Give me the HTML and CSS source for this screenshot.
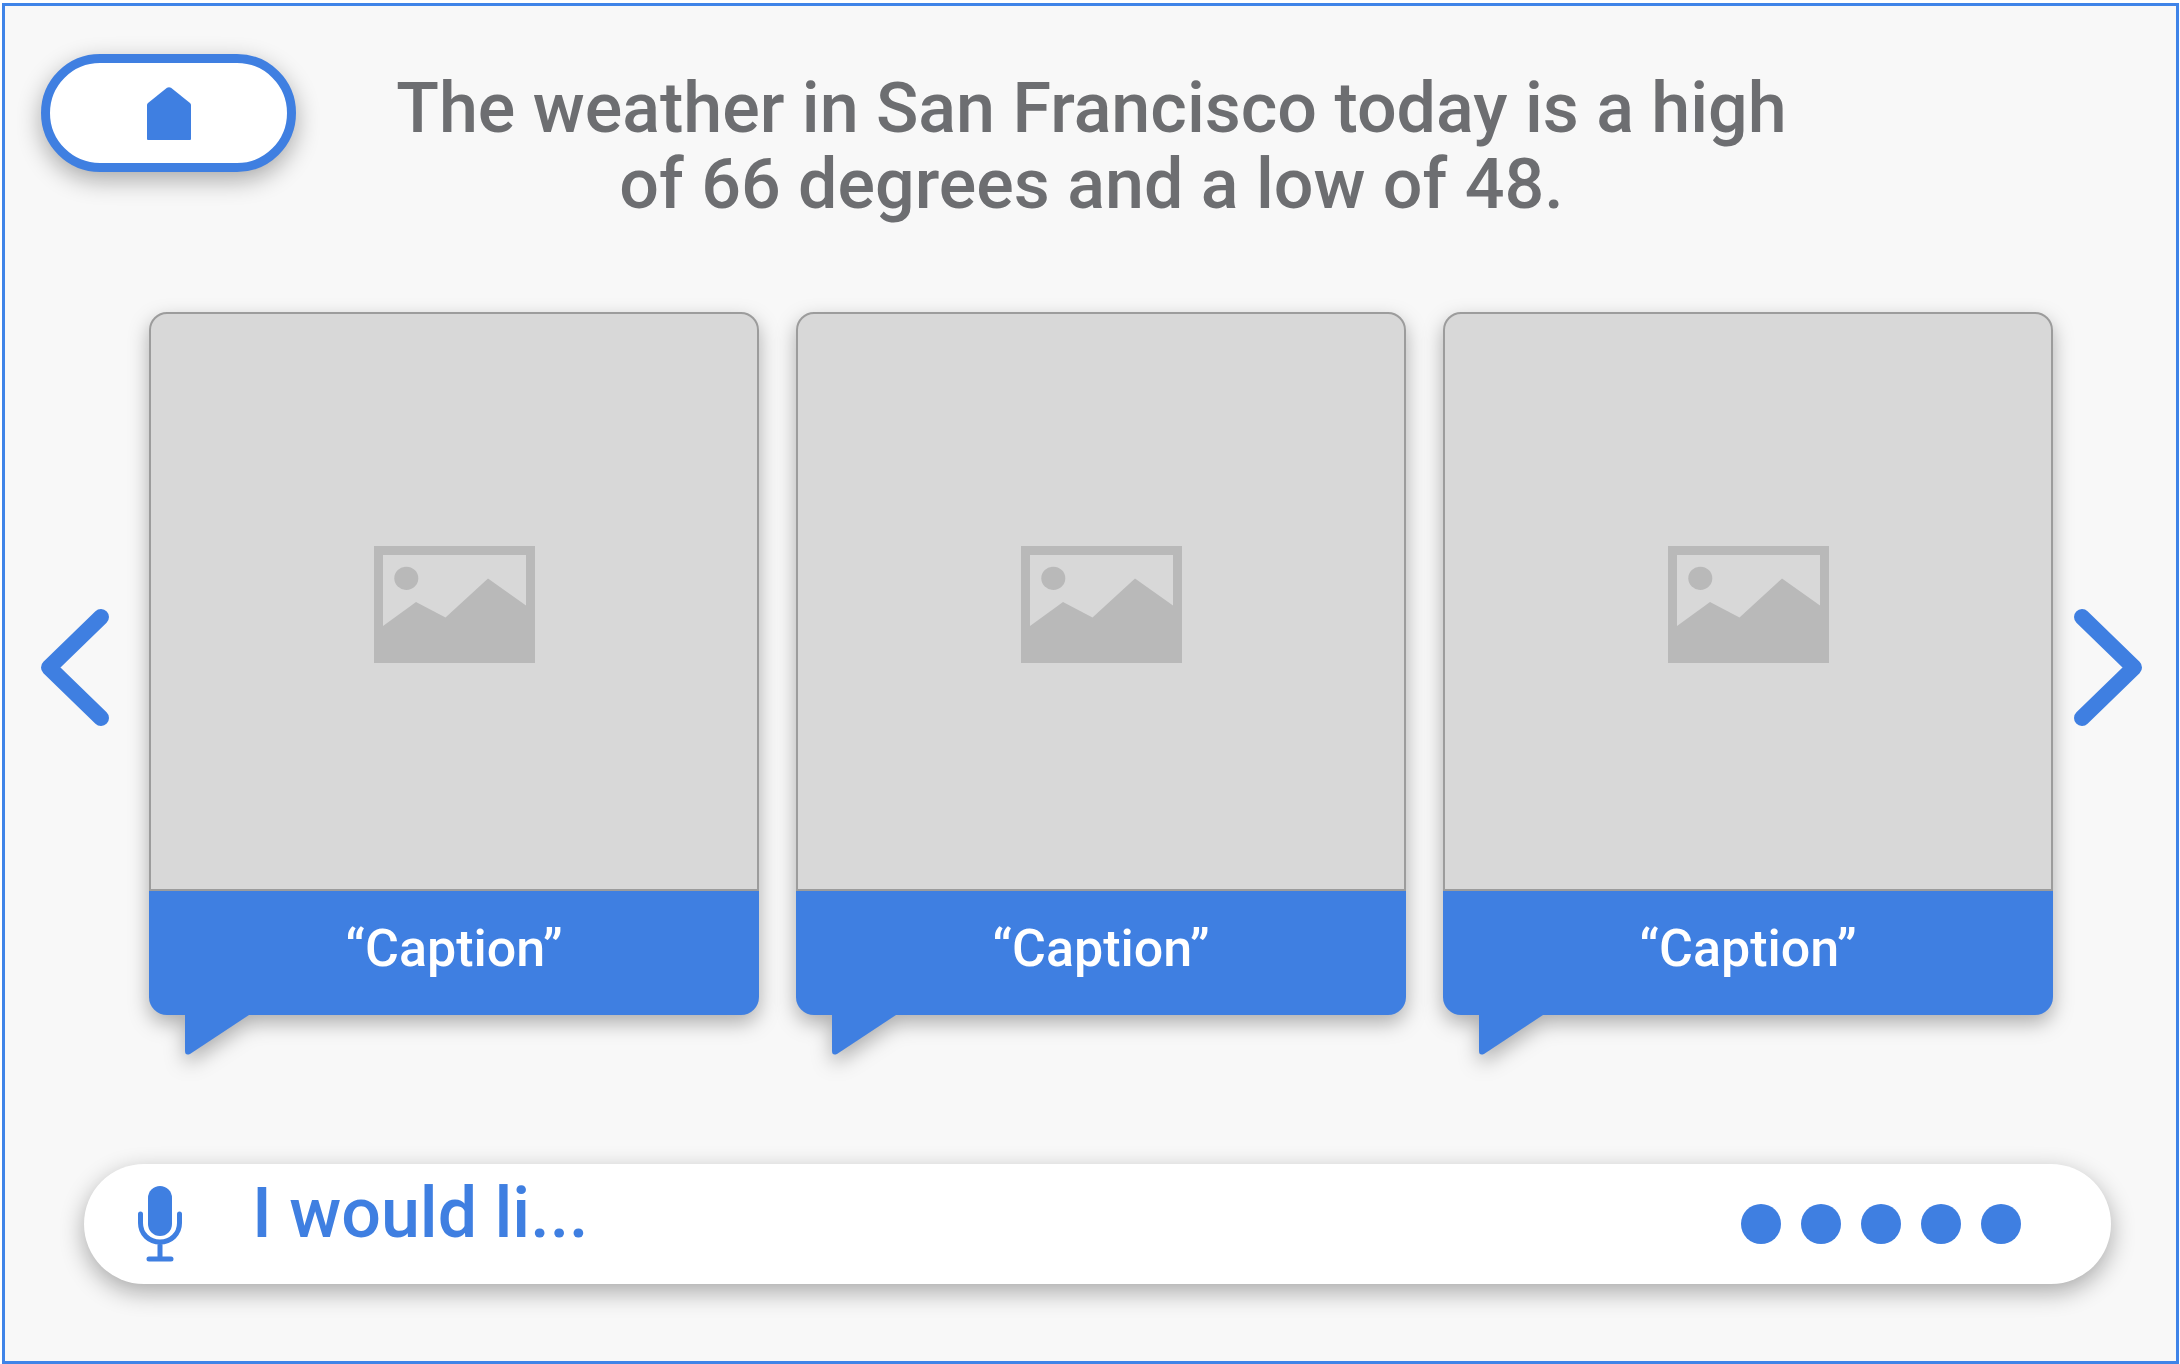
FILE: index.html
```html
<!DOCTYPE html>
<html lang="en">
<head>
<meta charset="utf-8">
<meta name="viewport" content="width=device-width, initial-scale=1">
<title>Weather</title>
<link rel="stylesheet" href="styles.css">
</head>
<body>
<svg class="sprite" aria-hidden="true">
  <symbol id="picture" viewBox="0 0 161 117">
    <path fill-rule="evenodd" d="M0 0H161V117H0ZM9 9V80L42 56L71.500 71.500L114 32.500L152 59.500V9Z"/>
    <ellipse cx="32.300" cy="32.300" rx="12" ry="11.600"/>
  </symbol>
  <symbol id="tail" viewBox="0 0 64 40">
    <path d="M0 0H64L5 39Q0 41 0 36Z"/>
  </symbol>
</svg>
<div class="frame">
  <header class="header">
    <button class="home" type="button" aria-label="Home">
      <svg class="home-icon" viewBox="0 0 44 53"><path d="M20 .800Q22 -.500 24 .800L43 16Q44 17 44 18V52Q44 53 43 53H1Q0 53 0 52V18Q0 17 1 16Z"/></svg>
    </button>
    <h1 class="title">The weather in San Francisco today is a high of 66 degrees and a low of 48.</h1>
  </header>

  <main class="carousel">
    <button class="arrow" type="button" aria-label="Previous">
      <svg class="arrow-icon" viewBox="0 0 68 117"><path d="M60 8L8 58.500L60 109"/></svg>
    </button>
    <div class="cards">
      <figure class="card">
        <div class="photo"><svg class="photo-icon"><use href="#picture"/></svg></div>
        <figcaption class="caption">“Caption”</figcaption>
        <svg class="tail"><use href="#tail"/></svg>
      </figure>
      <figure class="card">
        <div class="photo"><svg class="photo-icon"><use href="#picture"/></svg></div>
        <figcaption class="caption">“Caption”</figcaption>
        <svg class="tail"><use href="#tail"/></svg>
      </figure>
      <figure class="card">
        <div class="photo"><svg class="photo-icon"><use href="#picture"/></svg></div>
        <figcaption class="caption">“Caption”</figcaption>
        <svg class="tail"><use href="#tail"/></svg>
      </figure>
    </div>
    <button class="arrow" type="button" aria-label="Next">
      <svg class="arrow-icon" viewBox="0 0 68 117"><path d="M8 8L60 58.500L8 109"/></svg>
    </button>
  </main>

  <form class="voice">
    <button class="mic" type="button" aria-label="Speak">
      <svg class="mic-icon" viewBox="0 0 44 76">
        <rect x="10" y="0" width="24" height="50" rx="12"/>
        <path class="mic-line" d="M2.500 28V37C2.500 48 11 56 22 56S41.500 48 41.500 37V28M22 56V73M11 73H33"/>
      </svg>
    </button>
    <input class="query" type="text" aria-label="Your request" value="I would li...">
    <div class="dots" aria-hidden="true">
      <span class="dot"></span><span class="dot"></span><span class="dot"></span><span class="dot"></span><span class="dot"></span>
    </div>
  </form>
</div>
</body>
</html>
```
FILE: styles.css
```css
:root {
  --blue: #3f7fe1;
  --font: Roboto, "Open Sans", sans-serif;
}

* {
  box-sizing: border-box;
}

body {
  margin: 0;
  padding: 3px 1px 0 2px;
  background: #fff;
  font-family: var(--font);
  font-weight: 500;
}

button {
  padding: 0;
  border: 0;
  background: none;
  cursor: pointer;
}

svg {
  display: block;
}

.sprite {
  position: absolute;
  width: 0;
  height: 0;
}

.frame {
  display: flex;
  flex-direction: column;
  min-height: calc(100vh - 3px);
  padding: 48px 34px 77px 36px;
  border: 3px solid #3f84e8;
  background: #f8f8f8;
}

.header {
  display: grid;
  grid-template-columns: 255px minmax(0, 1400px) 255px;
  justify-content: space-between;
  align-items: start;
}

.home {
  display: flex;
  align-items: center;
  justify-content: center;
  height: 118px;
  border: 9px solid var(--blue);
  border-radius: 59px;
  background: #fff;
  box-shadow: 0 8px 24px rgba(0, 0, 0, 0.32);
}

.home-icon {
  width: 44px;
  height: 53px;
  fill: var(--blue);
}

.title {
  margin: 0;
  padding-top: 16px;
  color: #6d6e71;
  font-size: 70px;
  font-weight: 500;
  line-height: 76px;
  text-align: center;
}

.carousel {
  display: grid;
  grid-template-columns: 68px minmax(0, 1fr) 68px;
  align-items: center;
  padding-top: 90px;
}

.arrow {
  padding-top: 8px;
}

.arrow-icon {
  width: 68px;
  height: 117px;
  fill: none;
  stroke: var(--blue);
  stroke-width: 16;
  stroke-linecap: round;
  stroke-linejoin: round;
}

.cards {
  display: grid;
  grid-template-columns: repeat(3, minmax(0, 1fr));
  gap: 37px;
  padding: 0 21px 0 40px;
}

.card {
  position: relative;
  margin: 0;
  filter: drop-shadow(0 8px 10px rgba(0, 0, 0, 0.3));
}

.photo {
  display: flex;
  align-items: center;
  justify-content: center;
  aspect-ratio: 610 / 579;
  padding-top: 6px;
  border: 2px solid #9c9c9c;
  border-radius: 18px 18px 0 0;
  background: #d8d8d8;
}

.photo-icon {
  width: 161px;
  height: 117px;
  fill: #b9b9b9;
}

.caption {
  padding: 26px 24px 34px;
  border-radius: 0 0 18px 18px;
  background: var(--blue);
  color: #fff;
  font-size: 52px;
  line-height: 64px;
  text-align: center;
}

.tail {
  position: absolute;
  top: 100%;
  left: 36px;
  width: 64px;
  height: 40px;
  fill: var(--blue);
}

.voice {
  display: flex;
  align-items: center;
  height: 120px;
  margin: auto 31px 0 43px;
  padding: 0 90px 0 54px;
  border-radius: 60px;
  background: #fff;
  box-shadow: 0 8px 24px rgba(0, 0, 0, 0.32);
}

.mic-icon {
  width: 44px;
  height: 76px;
  fill: var(--blue);
}

.mic-line {
  fill: none;
  stroke: var(--blue);
  stroke-width: 5;
  stroke-linecap: round;
}

.query {
  flex: 1;
  min-width: 0;
  height: 100px;
  margin-left: 70px;
  padding: 0 0 22px;
  border: 0;
  outline: 0;
  background: transparent;
  color: var(--blue);
  font-family: inherit;
  font-size: 70px;
  font-weight: 500;
}

.dots {
  display: flex;
  gap: 20px;
}

.dot {
  width: 40px;
  height: 40px;
  border-radius: 50%;
  background: var(--blue);
}
```
